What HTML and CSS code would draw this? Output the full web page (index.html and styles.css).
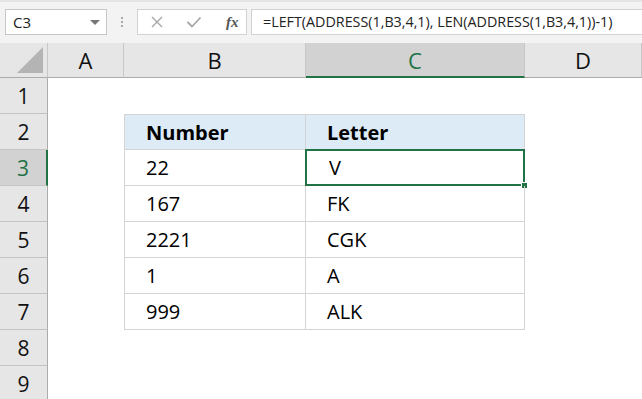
FILE: index.html
```html
<!DOCTYPE html>
<html lang="en">
<head>
    <meta charset="UTF-8">
    <title>LEFT ADDRESS - column letter</title>
    <link rel="stylesheet" href="styles.css">
</head>
<body>
    <div class="toolbar">
        <div class="name-box">
            <span>C3</span>
            <span class="drop"></span>
        </div>
        <div class="grip"><i></i><i></i><i></i></div>
        <div class="fx-buttons">
            <svg width="14" height="14" viewBox="0 0 14 14"><path d="M2 2 L12 12 M12 2 L2 12" stroke="#a6a6a6" stroke-width="1.4" fill="none"/></svg>
            <svg width="16" height="14" viewBox="0 0 16 14"><path d="M1.5 7 L6 11.5 L14.5 2.5" stroke="#a6a6a6" stroke-width="1.8" fill="none"/></svg>
            <span class="fx">fx</span>
        </div>
        <div class="formula">=LEFT(ADDRESS(1,B3,4,1), LEN(ADDRESS(1,B3,4,1))-1)</div>
    </div>

    <div class="sheet">
        <div class="corner"><span class="tri"></span></div>
        <div class="col-head">A</div>
        <div class="col-head">B</div>
        <div class="col-head active">C</div>
        <div class="col-head">D</div>

        <div class="row-head">1</div>
        <div class="row-head">2</div>
        <div class="row-head active">3</div>
        <div class="row-head">4</div>
        <div class="row-head">5</div>
        <div class="row-head">6</div>
        <div class="row-head">7</div>
        <div class="row-head">8</div>
        <div class="row-head">9</div>

        <div class="data">
            <div class="cell head">Number</div>
            <div class="cell head">Letter</div>
            <div class="cell">22</div>
            <div class="cell selected">V<span class="handle"></span></div>
            <div class="cell">167</div>
            <div class="cell">FK</div>
            <div class="cell">2221</div>
            <div class="cell">CGK</div>
            <div class="cell">1</div>
            <div class="cell">A</div>
            <div class="cell">999</div>
            <div class="cell">ALK</div>
        </div>
    </div>
</body>
</html>
```

FILE: styles.css
```css
* {
    margin: 0;
    padding: 0;
    box-sizing: border-box;
}

body {
    width: 642px;
    height: 399px;
    overflow: hidden;
    background: #fff;
    font-family: 'Open Sans', 'Noto Sans', sans-serif;
    color: #000;
}

/* formula bar */
.toolbar {
    height: 43px;
    background: #f3f3f3;
    border-top: 2px solid #e4e4e4;
    display: flex;
    align-items: flex-start;
    padding-top: 7px;
}

.name-box {
    margin-left: 5px;
    width: 102px;
    height: 26px;
    background: #fff;
    border: 1px solid #c6c6c6;
    display: flex;
    align-items: center;
    justify-content: space-between;
    padding: 0 6px 0 7px;
    font-size: 15px;
    color: #222;
}

.drop {
    width: 0;
    height: 0;
    border-left: 5px solid transparent;
    border-right: 5px solid transparent;
    border-top: 5px solid #777;
}

.grip {
    width: 30px;
    height: 26px;
    display: flex;
    flex-direction: column;
    align-items: center;
    justify-content: center;
    gap: 2px;
}

.grip i {
    width: 2px;
    height: 2px;
    background: #a8a8a8;
}

.fx-buttons {
    width: 110px;
    height: 26px;
    background: #fff;
    border: 1px solid #d2d2d2;
    display: flex;
    align-items: center;
    padding-left: 12px;
    gap: 22px;
}

.fx {
    font-family: 'Liberation Serif', serif;
    font-style: italic;
    font-weight: bold;
    font-size: 15px;
    color: #555;
    margin-left: 2px;
}

.formula {
    flex: 1;
    margin-left: 4px;
    height: 26px;
    background: #fff;
    border: 1px solid #d2d2d2;
    border-right: none;
    padding-left: 11px;
    font-size: 14.3px;
    line-height: 24px;
    color: #222;
    white-space: nowrap;
}

/* grid */
.sheet {
    display: grid;
    grid-template-columns: 48px 76px 182px 219px 117px;
    grid-template-rows: 35px repeat(9, 36px);
}

.corner {
    background: #e6e6e6;
    border-right: 1px solid #c8c8c8;
    border-bottom: 1px solid #ababab;
    position: relative;
}

.tri {
    position: absolute;
    right: 4px;
    bottom: 4px;
    width: 0;
    height: 0;
    border-left: 26px solid transparent;
    border-bottom: 26px solid #b4b4b4;
}

.col-head {
    background: #e6e6e6;
    border-right: 1px solid #c8c8c8;
    border-bottom: 1px solid #ababab;
    display: flex;
    align-items: center;
    justify-content: center;
    font-size: 22px;
    color: #111;
}

.col-head.active {
    background: #d2d2d2;
    color: #217346;
    border-bottom: 2px solid #217346;
}

.row-head {
    grid-column: 1;
    background: #e6e6e6;
    border-right: 1px solid #ababab;
    border-bottom: 1px solid #c4c4c4;
    display: flex;
    align-items: center;
    justify-content: center;
    font-size: 21px;
    color: #111;
}

.row-head.active {
    background: #d2d2d2;
    color: #217346;
    border-right: 2px solid #217346;
}

/* table B2:C7 */
.data {
    grid-column: 3 / 5;
    grid-row: 3 / 9;
    display: grid;
    grid-template-columns: 182px 219px;
    grid-template-rows: repeat(6, 36px);
}

.cell {
    border-right: 1px solid #d4d4d4;
    border-bottom: 1px solid #d4d4d4;
    padding-left: 21px;
    display: flex;
    align-items: center;
    font-size: 20px;
    position: relative;
}

.cell:nth-child(odd) {
    border-left: 1px solid #d4d4d4;
}

.cell.head {
    background: #ddebf7;
    border-top: 1px solid #d4d4d4;
    font-weight: bold;
}

.selected {
    border: 2px solid #217346;
    margin-left: -1px;
    margin-top: -1px;
    padding-left: 22px;
}

.handle {
    position: absolute;
    right: -5px;
    bottom: -5px;
    width: 7px;
    height: 7px;
    background: #217346;
    border: 1px solid #fff;
}
```
